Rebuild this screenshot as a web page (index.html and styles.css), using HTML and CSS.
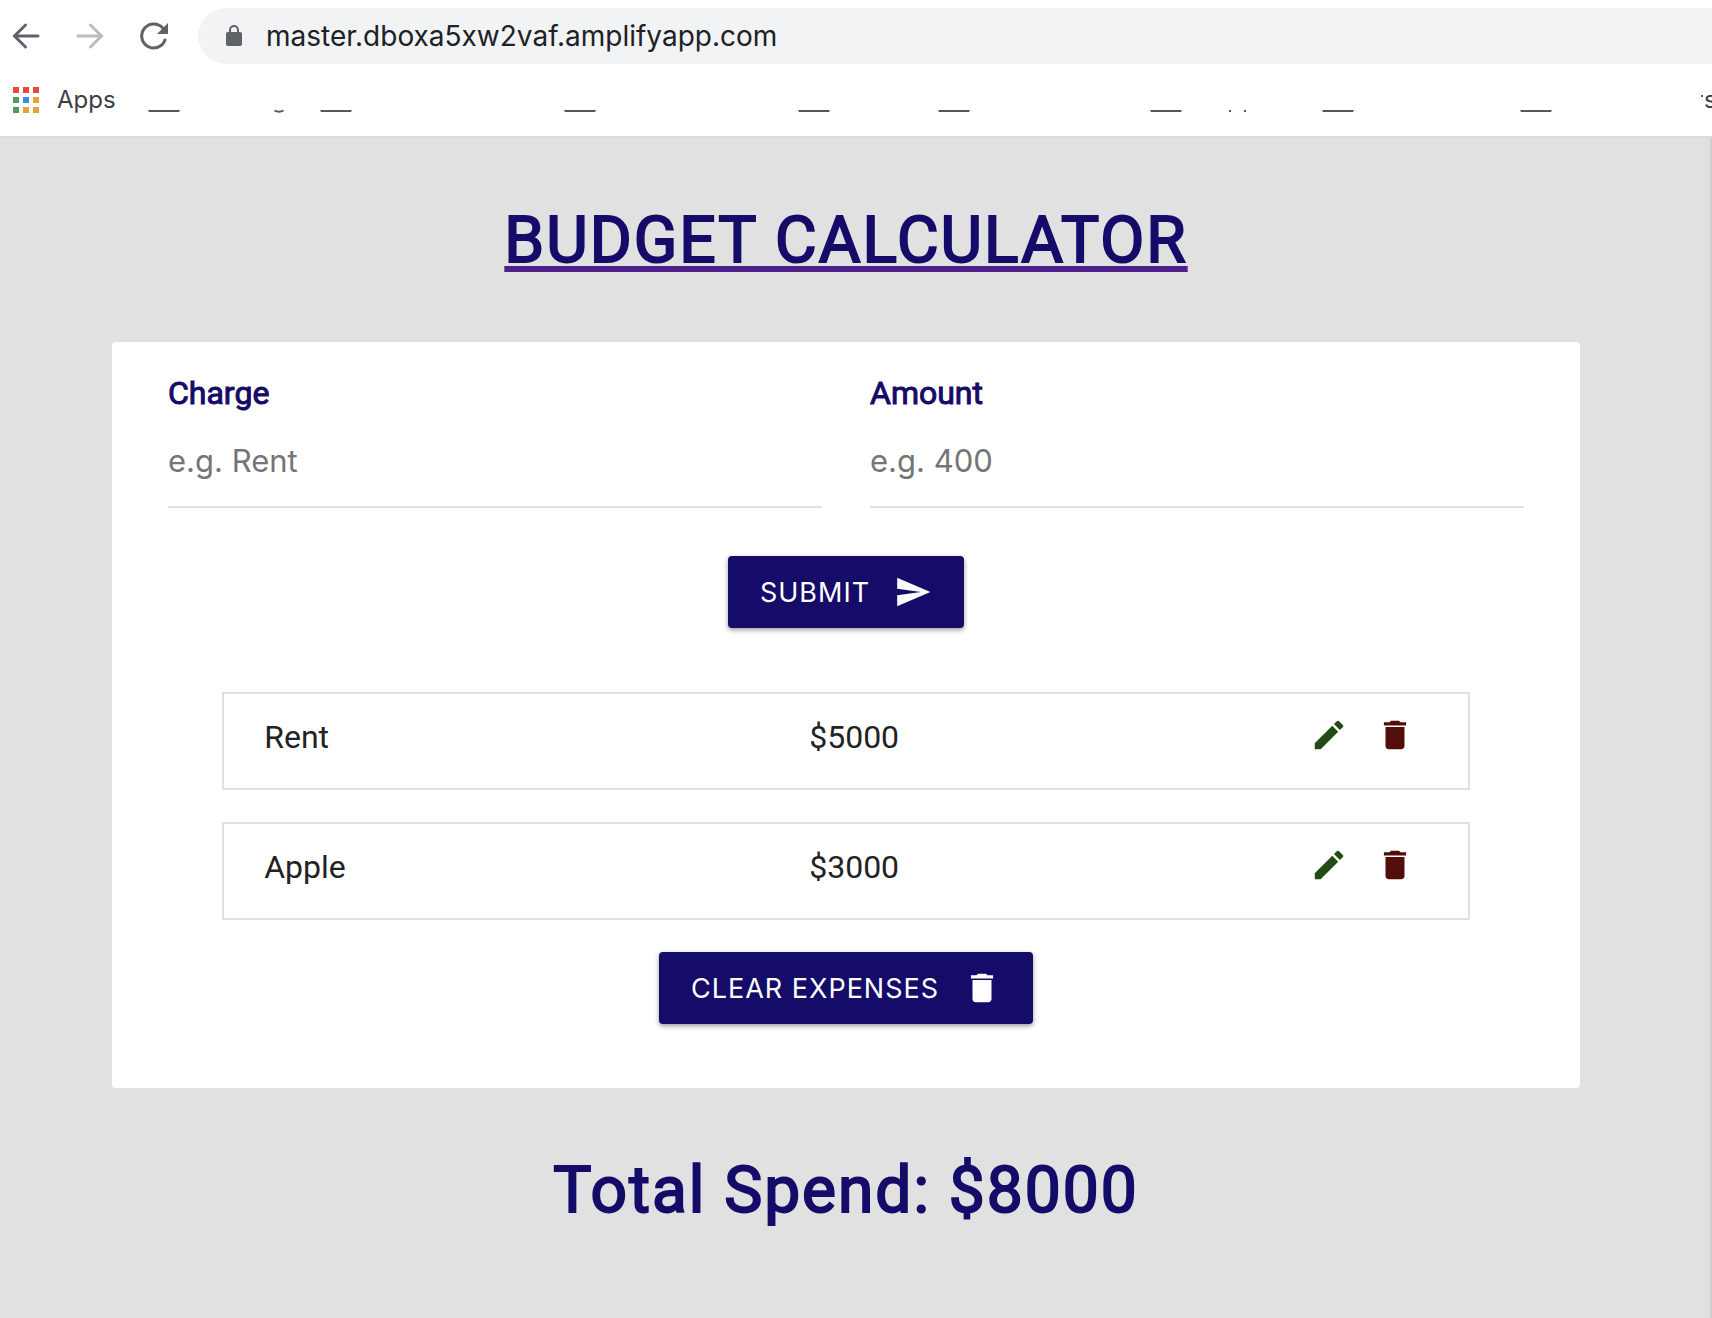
FILE: index.html
```html
<!DOCTYPE html>
<html lang="en">
<head>
<meta charset="utf-8">
<meta name="viewport" content="width=device-width, initial-scale=1">
<title>Budget Calculator</title>
<link rel="stylesheet" href="styles.css">
</head>
<body>
<svg class="sprite" aria-hidden="true">
  <symbol id="icon-edit" viewBox="0 0 24 24"><path d="M3 17.25V21h3.75L17.81 9.94l-3.75-3.75L3 17.25zM20.71 7.04a1 1 0 0 0 0-1.41l-2.34-2.34a1 1 0 0 0-1.41 0l-1.83 1.83 3.75 3.75 1.83-1.83z"/></symbol>
  <symbol id="icon-delete" viewBox="0 0 24 24"><path d="M6 19c0 1.1.9 2 2 2h8c1.1 0 2-.9 2-2V7H6v12zM19 4h-3.5l-1-1h-5l-1 1H5v2h14V4z"/></symbol>
  <symbol id="icon-send" viewBox="0 0 24 24"><path d="M2.01 21L23 12 2.01 3 2 10l15 2-15 2z"/></symbol>
</svg>

<header class="browser">
  <div class="toolbar">
    <button class="nav" type="button" aria-label="Back">
      <svg width="28" height="28" viewBox="0 0 28 28"><path d="M26 14H3M13.500 3L2.500 14l11 11"/></svg>
    </button>
    <button class="nav nav-off" type="button" aria-label="Forward">
      <svg width="28" height="28" viewBox="0 0 28 28"><path d="M2 14h23M14.500 3l11 11-11 11"/></svg>
    </button>
    <button class="nav" type="button" aria-label="Reload">
      <svg width="28" height="28" viewBox="0 0 28 28"><path d="M25 18A12 12 0 1 1 23.500 7"/><path class="solid" d="M28 1v11H17z"/></svg>
    </button>
    <div class="omnibox">
      <svg class="lock" width="16" height="22" viewBox="0 0 16 22" aria-hidden="true"><path class="shackle" d="M4 9V5a4 4 0 0 1 8 0v4"/><rect y="7" width="16" height="14" rx="2"/></svg>
      <input class="url" type="text" aria-label="Address" value="master.dboxa5xw2vaf.amplifyapp.com">
    </div>
  </div>
  <nav class="bookmarks" aria-label="Bookmarks">
    <a class="apps" href="#">
      <svg width="26" height="26" viewBox="0 0 26 26" aria-hidden="true">
        <path fill="#e64a3f" d="M0 0h6v6H0zM10 0h6v6h-6zM20 0h6v6h-6z"/>
        <path fill="#56995f" d="M0 10h6v6H0zM0 20h6v6H0z"/>
        <path fill="#4189ed" d="M10 10h6v6h-6z"/>
        <path fill="#e5a43a" d="M20 10h6v6h-6zM10 20h6v6h-6zM20 20h6v6h-6z"/>
      </svg>
      <span>Apps</span>
    </a>
    <svg class="folders" width="1556" height="28" viewBox="148 86 1556 28" aria-hidden="true">
      <path class="edge" d="M148 110h32l-1 2h-30zM320 110h32l-1 2h-30zM564 110h32l-1 2h-30zM798 110h32l-1 2h-30zM938 110h32l-1 2h-30zM1150 110h32l-1 2h-30zM1322 110h32l-1 2h-30zM1520 110h32l-1 2h-30z"/>
      <path class="tail" d="M274.500 110.500q4.500 2.500 9 0"/>
      <path class="edge" d="M1229 110h2v2h-2zM1244 110h2v2h-2zM1701 95h2v2h-2z"/>
    </svg>
    <span>s</span>
  </nav>
</header>

<main class="page">
  <h1 class="title"><a href="#">BUDGET CALCULATOR</a></h1>

  <section class="card">
    <form class="form">
      <div class="fields">
        <div class="field">
          <label for="charge">Charge</label>
          <input id="charge" type="text" placeholder="e.g. Rent">
        </div>
        <div class="field">
          <label for="amount">Amount</label>
          <input id="amount" type="text" placeholder="e.g. 400">
        </div>
      </div>
      <button class="btn" type="submit">SUBMIT<svg class="icon"><use href="#icon-send"/></svg></button>
    </form>

    <ul class="list">
      <li class="item">
        <span>Rent</span>
        <span>$5000</span>
        <div class="actions">
          <button class="edit" type="button" aria-label="Edit Rent"><svg class="icon"><use href="#icon-edit"/></svg></button>
          <button class="delete" type="button" aria-label="Delete Rent"><svg class="icon"><use href="#icon-delete"/></svg></button>
        </div>
      </li>
      <li class="item">
        <span>Apple</span>
        <span>$3000</span>
        <div class="actions">
          <button class="edit" type="button" aria-label="Edit Apple"><svg class="icon"><use href="#icon-edit"/></svg></button>
          <button class="delete" type="button" aria-label="Delete Apple"><svg class="icon"><use href="#icon-delete"/></svg></button>
        </div>
      </li>
    </ul>

    <button class="btn" type="button">CLEAR EXPENSES<svg class="icon"><use href="#icon-delete"/></svg></button>
  </section>

  <h2 class="title">Total Spend: $8000</h2>
</main>
</body>
</html>
```
FILE: styles.css
```css
* {
  box-sizing: border-box;
}

body {
  margin: 0;
  min-height: 100vh;
  display: flex;
  flex-direction: column;
  overflow-x: hidden;
  background: #e1e1e1;
  color: #222;
  font-family: Roboto, sans-serif;
  font-size: 32px;
}

button,
input {
  border: 0;
  background: none;
  font-family: Inter, sans-serif;
}

button {
  cursor: pointer;
}

.sprite {
  display: none;
}

.icon {
  width: 38px;
  height: 38px;
  flex: none;
  fill: currentColor;
}

/* Browser bar */

.browser {
  background: #fff;
  border-bottom: 2px solid #dadce0;
  font-family: Inter, sans-serif;
}

.toolbar {
  display: flex;
  align-items: center;
  gap: 36px;
  padding: 8px 0 8px 12px;
}

.nav {
  display: flex;
  padding: 0;
  color: #5f6368;
}

.nav svg {
  fill: none;
  stroke: currentColor;
  stroke-width: 3;
  stroke-linecap: round;
}

.nav .solid {
  fill: currentColor;
  stroke: none;
}

.nav-off {
  color: #babcbe;
}

.omnibox {
  flex: 1;
  display: flex;
  align-items: center;
  gap: 24px;
  height: 56px;
  margin-left: -6px;
  padding-left: 28px;
  border-radius: 28px 0 0 28px;
  background: #f1f3f4;
}

.lock {
  flex: none;
  fill: #5f6368;
}

.lock .shackle {
  fill: none;
  stroke: #5f6368;
  stroke-width: 2;
}

.url {
  flex: 1;
  min-width: 0;
  padding: 0;
  color: #202124;
  font-size: 28px;
}

.bookmarks {
  display: flex;
  align-items: center;
  height: 64px;
  padding: 0 0 8px 13px;
  overflow: hidden;
  color: #3c4043;
  font-size: 24px;
  line-height: 28px;
}

.apps {
  display: flex;
  flex: none;
  align-items: center;
  gap: 18px;
  width: 135px;
  color: inherit;
  text-decoration: none;
}

.folders {
  flex: none;
}

.folders .edge {
  fill: #55585b;
}

.folders .tail {
  fill: none;
  stroke: #55585b;
  stroke-width: 2;
}

/* Calculator */

.page {
  flex: 1;
  padding: 0 130px 0 112px;
  border-right: 2px solid #cfcfcf;
}

.title {
  margin: 0;
  padding: 61px 0 59px;
  color: #150b69;
  font-size: 64px;
  font-weight: 400;
  line-height: 84px;
  letter-spacing: 2px;
  text-align: center;
  -webkit-text-stroke: 2px #150b69;
}

.title a {
  color: inherit;
  text-decoration: underline 6px #4e2089;
  text-decoration-skip-ink: none;
  text-underline-offset: 4px;
}

.card {
  display: flex;
  flex-direction: column;
  align-items: center;
  padding: 26px 56px 64px;
  border-radius: 4px;
  background: #fff;
}

.form {
  width: 100%;
  display: flex;
  flex-direction: column;
  align-items: center;
  gap: 48px;
}

.fields {
  width: 100%;
  display: grid;
  grid-template-columns: 1fr 1fr;
  gap: 48px;
}

.field {
  display: flex;
  flex-direction: column;
}

.field label {
  color: #150b69;
  line-height: 50px;
  -webkit-text-stroke: 1px #150b69;
}

.field input {
  width: 100%;
  height: 90px;
  padding: 0 0 4px;
  border-bottom: 2px solid #e0e0e0;
  color: #222;
  font-size: 31px;
}

.field input::placeholder {
  color: #757575;
}

.btn {
  display: flex;
  align-items: center;
  gap: 24px;
  height: 72px;
  padding: 0 32px;
  border-radius: 4px;
  background: #150b69;
  box-shadow: 0 2px 5px rgba(0, 0, 0, 0.4);
  color: #fff;
  font-size: 27px;
  letter-spacing: 1px;
}

.list {
  width: 92%;
  margin: 64px 0 32px;
  padding: 0;
  display: grid;
  gap: 32px;
  list-style: none;
}

.item {
  display: grid;
  grid-template-columns: 28fr 25fr auto;
  align-items: start;
  padding: 19px 40px 27px;
  border: 2px solid #e0e0e0;
  line-height: 48px;
}

.actions {
  display: flex;
}

.actions button {
  display: flex;
  align-items: center;
  height: 44px;
  padding: 0 14px;
}

.edit {
  color: #224b15;
}

.delete {
  color: #530d0a;
}
```
